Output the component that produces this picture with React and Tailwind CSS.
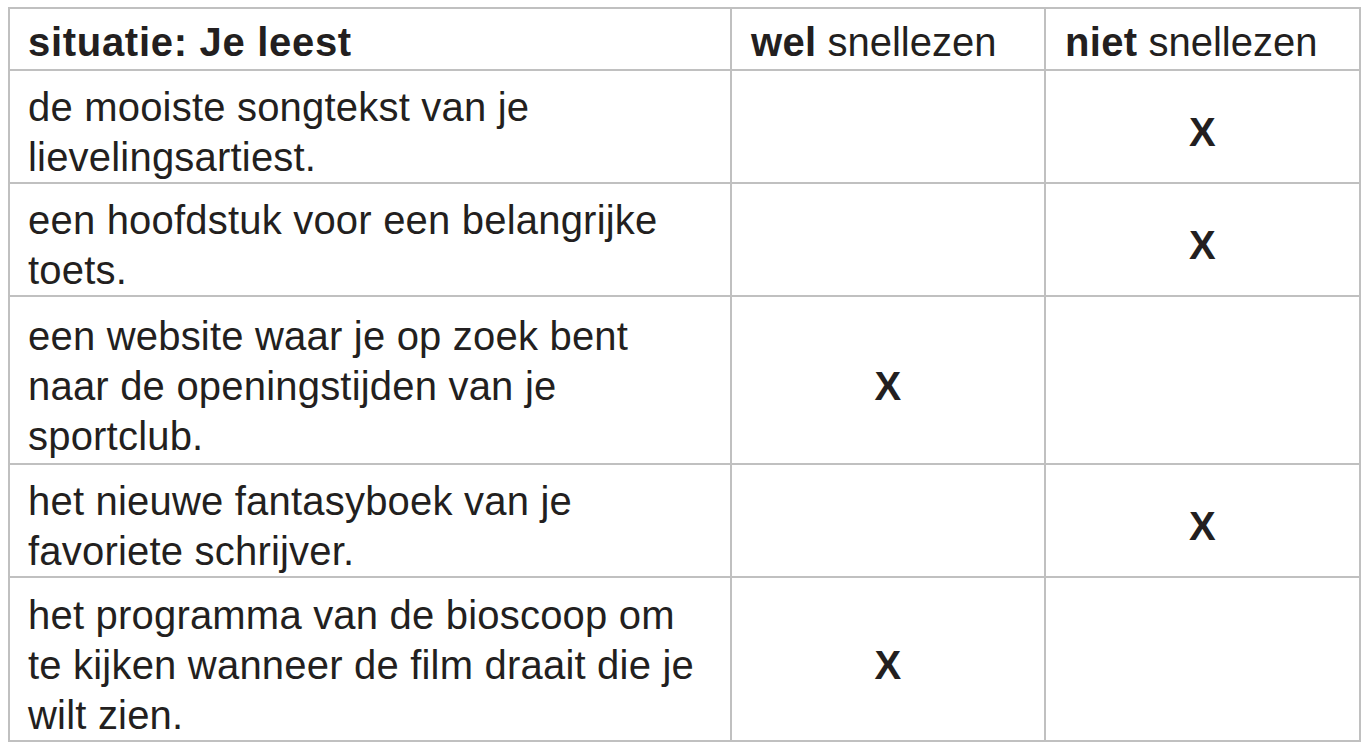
import React from "react";

const rows = [
  { lines: ["de mooiste songtekst van je", "lievelingsartiest."], mark: "niet", h: "h-[113px]" },
  { lines: ["een hoofdstuk voor een belangrijke", "toets."], mark: "niet", h: "h-[113px]" },
  { lines: ["een website waar je op zoek bent", "naar de openingstijden van je", "sportclub."], mark: "wel", h: "h-[168px]" },
  { lines: ["het nieuwe fantasyboek van je", "favoriete schrijver."], mark: "niet", h: "h-[113px]" },
  { lines: ["het programma van de bioscoop om", "te kijken wanneer de film draait die je", "wilt zien."], mark: "wel", h: "h-[164px]" },
];

const App = () => {
  return (
    <div className="min-h-[752px] w-full bg-white pt-[7px] pl-[8px] text-[#231f20] font-['Liberation_Sans',Arial,sans-serif]">
      <table className="table-fixed border-collapse w-[1351px] text-[40px] leading-[51px]">
        <colgroup>
          <col className="w-[722px]" />
          <col className="w-[314px]" />
          <col className="w-[315px]" />
        </colgroup>
        <thead>
          <tr className="h-[62px]">
            <th className="border-2 border-[#c0c0c0] px-[18px] pt-[6px] text-left font-bold align-middle tracking-[0.7px]">situatie: Je leest</th>
            <th className="border-2 border-[#c0c0c0] px-[19px] pt-[6px] text-left font-normal align-middle">
              <span className="font-bold tracking-[0.3px]">wel</span> snellezen
            </th>
            <th className="border-2 border-[#c0c0c0] px-[19px] pt-[6px] text-left font-normal align-middle">
              <span className="font-bold tracking-[0.3px]">niet</span> snellezen
            </th>
          </tr>
        </thead>
        <tbody className="tracking-[0.2px] leading-[50px]">
          {rows.map((row, i) => (
            <tr key={i} className={row.h}>
              <td className="border-2 border-[#c0c0c0] px-[18px] pt-[11px] align-middle">
                {row.lines.map((l, j) => (
                  <div key={j} className="whitespace-nowrap">{l}</div>
                ))}
              </td>
              <td className="border-2 border-[#c0c0c0] text-center font-bold align-middle pt-[11px]">
                {row.mark === "wel" ? "X" : ""}
              </td>
              <td className="border-2 border-[#c0c0c0] text-center font-bold align-middle pt-[11px]">
                {row.mark === "niet" ? "X" : ""}
              </td>
            </tr>
          ))}
        </tbody>
      </table>
    </div>
  );
};

export default App;
